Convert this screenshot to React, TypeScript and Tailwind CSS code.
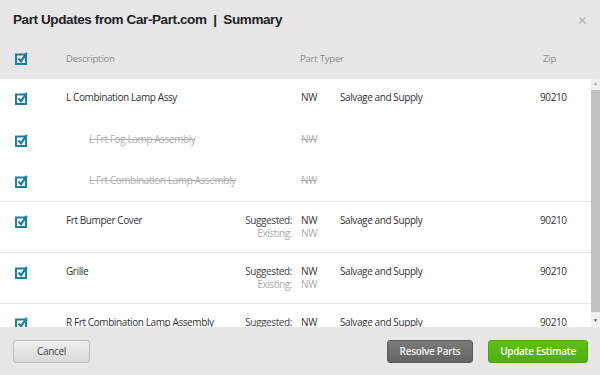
import { X } from 'lucide-react'

type Row = {
  desc: string
  sub?: boolean
  suggested?: boolean
  nw: string
  supplier?: string
  zip?: string
}

const rows: Row[][] = [
  [
    { desc: 'L Combination Lamp Assy', nw: 'NW', supplier: 'Salvage and Supply', zip: '90210' },
    { desc: 'L Frt Fog Lamp Assembly', sub: true, nw: 'NW' },
    { desc: 'L Frt Combination Lamp Assembly', sub: true, nw: 'NW' },
  ],
  [{ desc: 'Frt Bumper Cover', suggested: true, nw: 'NW', supplier: 'Salvage and Supply', zip: '90210' }],
  [{ desc: 'Grille', suggested: true, nw: 'NW', supplier: 'Salvage and Supply', zip: '90210' }],
  [{ desc: 'R Frt Combination Lamp Assembly', suggested: true, nw: 'NW', supplier: 'Salvage and Supply', zip: '90210' }],
]

function Check() {
  return (
    <svg width="13" height="13" viewBox="0 0 13 13" className="block">
      <rect x="1" y="2.5" width="10" height="9.5" fill="none" stroke="#1d7ea4" strokeWidth="2" />
      <path d="M3.5 6.5 L6 9.2 L11.8 0.8" fill="none" stroke="#1d7ea4" strokeWidth="2.2" />
    </svg>
  )
}

function PartRow({ row, first }: { row: Row; first?: boolean }) {
  const h = row.suggested ? 'h-[50px]' : first ? 'h-[40px]' : 'h-[41px]'
  const pt = row.sub ? 'pt-[14px]' : 'pt-[12px]'
  return (
    <div className={`flex ${h} ${pt} text-[10px] leading-[13px] tracking-[-0.4px] whitespace-nowrap`}>
      <div className="w-[66px] pl-[15px] pt-[1px]">
        <Check />
      </div>
      {row.sub ? (
        <div className="w-[170px] pl-[23px] text-[#b0b0b0] line-through">{row.desc}</div>
      ) : (
        <div className="w-[170px] text-[#333]">{row.desc}</div>
      )}
      <div className="w-[56px] text-right">
        {row.suggested && (
          <>
            <div className="text-[#444]">Suggested:</div>
            <div className="text-[#aaa]">Existing:</div>
          </>
        )}
      </div>
      <div className="w-[9px]" />
      <div className="w-[39px]">
        {row.sub ? (
          <div className="text-[#b0b0b0] line-through">{row.nw}</div>
        ) : (
          <>
            <div className="text-[#333]">{row.nw}</div>
            {row.suggested && <div className="text-[#aaa]">NW</div>}
          </>
        )}
      </div>
      <div className="w-[200px] text-[#333]">{row.supplier}</div>
      <div className="text-[#333]">{row.zip}</div>
    </div>
  )
}

export default function App() {
  return (
    <div
      className="w-[600px] h-[375px] bg-[#e8e6e7] flex flex-col overflow-hidden"
      style={{ fontFamily: '"Open Sans", sans-serif' }}
    >
      <header className="h-[40px] flex items-center justify-between pl-[13px] pr-[12px] pt-[1px]">
        <h1 className="font-['Liberation_Sans',Arial,sans-serif] font-bold text-[13.5px] tracking-[-0.4px] text-[#222] whitespace-pre">
          Part Updates from Car-Part.com  |  Summary
        </h1>
        <X size={11} strokeWidth={2.4} className="text-[#b0b0b0]" />
      </header>

      <div className="h-[39px] flex items-center text-[9.5px] tracking-[-0.2px] text-[#8a8a8a]">
        <div className="w-[66px] pl-[15px] -mt-[2px]">
          <Check />
        </div>
        <div className="w-[234px]">Description</div>
        <div className="w-[243px]">Part Typer</div>
        <div>Zip</div>
      </div>

      <div className="h-[248px] bg-white flex">
        <div className="flex-1 overflow-hidden">
          {rows.map((group, i) => (
            <div key={i} className="border-b border-[#e8e8e8]">
              {group.map((r, j) => (
                <PartRow key={j} row={r} first={i === 0 && j === 0} />
              ))}
            </div>
          ))}
        </div>
        <div className="w-[9px] bg-[#f1f1f1] flex flex-col items-center">
          <div className="h-[10px] flex items-center text-[5px] text-[#a3a3a3]">▲</div>
          <div className="mt-[1px] h-[222px] w-full bg-[#c1c1c1]" />
          <div className="flex-1" />
          <div className="h-[12px] flex items-center text-[5px] text-[#505050]">▼</div>
        </div>
      </div>

      <footer className="flex-1 flex items-center justify-between pl-[13px] pr-[12px]">
        <button className="w-[77px] h-[23px] rounded-[3px] border border-[#bdbdbd] bg-gradient-to-b from-[#f0f0f0] to-[#d9d9d9] text-[10px] tracking-[-0.3px] text-[#444]">
          Cancel
        </button>
        <div className="flex gap-[15px]">
          <button className="w-[86px] h-[23px] rounded-[3px] border border-[#5e5d5c] bg-gradient-to-b from-[#7c7b7a] to-[#646362] text-[10px] tracking-[-0.3px] font-semibold text-[#f0f0f0]">
            Resolve Parts
          </button>
          <button className="w-[100px] h-[23px] rounded-[3px] border border-[#4aa40e] bg-gradient-to-b from-[#5ebf17] to-[#4fae0f] text-[10px] tracking-[-0.3px] font-semibold text-white">
            Update Estimate
          </button>
        </div>
      </footer>
    </div>
  )
}
